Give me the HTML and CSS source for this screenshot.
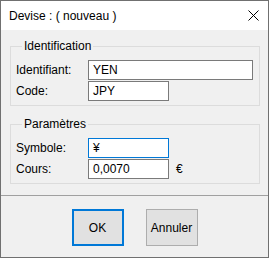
FILE: index.html
```html
<!DOCTYPE html>
<html>
<head>
<meta charset="utf-8">
<link rel="stylesheet" href="styles.css">
</head>
<body>
<div class="window">
  <div class="titlebar">
    <span class="title">Devise : ( nouveau )</span>
    <svg class="close" width="11" height="11" viewBox="0 0 11 11"><path d="M0.5 0.5 L10.5 10.5 M10.5 0.5 L0.5 10.5" stroke="#000" stroke-width="1" fill="none"/></svg>
  </div>
  <div class="content">
    <fieldset class="group">
      <legend>Identification</legend>
      <div class="grid">
        <label>Identifiant:</label><div class="input wide">YEN</div><span></span>
        <label>Code:</label><div class="input">JPY</div><span></span>
      </div>
    </fieldset>
    <fieldset class="group second">
      <legend>Paramètres</legend>
      <div class="grid">
        <label>Symbole:</label><div class="input focus">¥</div><span></span>
        <label>Cours:</label><div class="input">0,0070</div><span class="unit">€</span>
      </div>
    </fieldset>
  </div>
  <div class="footer">
    <div class="btn default">OK</div>
    <div class="btn">Annuler</div>
  </div>
</div>
</body>
</html>
```
FILE: styles.css
```css
html, body {
  margin: 0;
  padding: 0;
}
body {
  font-family: "Liberation Sans", Arial, sans-serif;
  font-size: 11px;
  color: #000;
}
.window {
  width: 269px;
  height: 258px;
  box-sizing: border-box;
  border: 1px solid #707070;
  display: flex;
  flex-direction: column;
  background: #f0f0f0;
}
.titlebar {
  height: 29px;
  background: #fff;
  display: flex;
  align-items: center;
  justify-content: space-between;
  padding: 0 9px 0 8px;
  flex: none;
}
.title {
  font-size: 12px;
}
.close {
  display: block;
  margin-top: 0px;
}
.content {
  padding: 9px 8px 0 9px;
  height: 165px;
  box-sizing: border-box;
  flex: none;
}
.group {
  margin: 0;
  border: 1px solid #dcdcdc;
  padding: 7px 4px 4px 5px;
  min-width: 0;
}
.group legend {
  padding: 0 2px;
  margin-left: 6px;
  line-height: 14px;
  font-size: 12px;
}
.second {
  margin-top: 11px;
}
.grid {
  display: grid;
  grid-template-columns: 72px auto 1fr;
  row-gap: 1px;
  align-items: center;
}
.grid label {
  font-size: 12px;
}
.input {
  height: 20px;
  box-sizing: border-box;
  border: 1px solid #7a7a7a;
  background: #fff;
  width: 81px;
  padding-left: 4px;
  line-height: 18px;
  font-size: 12px;
}
.input.wide {
  width: 165px;
}
.input.focus {
  border-color: #0078d7;
}
.unit {
  padding-left: 7px;
  font-size: 12px;
}
.footer {
  flex: 1;
  border-top: 1px solid #a0a0a0;
  display: flex;
  justify-content: center;
  align-items: flex-start;
  gap: 22px;
  padding-top: 13px;
}
.btn {
  width: 52px;
  height: 37px;
  box-sizing: border-box;
  background: #e1e1e1;
  border: 1px solid #adadad;
  display: flex;
  align-items: center;
  justify-content: center;
  font-size: 12px;
}
.btn.default {
  border: 2px solid #0078d7;
}
```
